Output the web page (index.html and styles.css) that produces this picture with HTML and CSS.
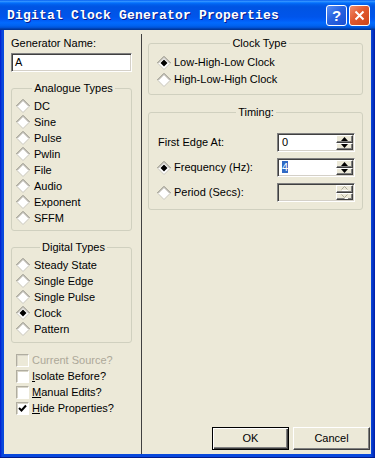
FILE: index.html
```html
<!DOCTYPE html>
<html lang="en">

<head>
    <meta charset="UTF-8">
    <meta name="viewport" content="width=device-width, initial-scale=1.0">
    <title>Digital Clock Generator Properties</title>
    <link rel="stylesheet" href="styles.css">
</head>

<body>
    <svg class="defs" width="0" height="0">
        <defs>
            <symbol id="dia" viewBox="0 0 14 14">
                <polygon points="7,0.5 13.5,7 7,13.5 0.5,7" fill="#fff" />
                <polyline points="0.5,7 7,0.5 13.5,7" fill="none" stroke="#716f64" />
                <polyline points="1.8,7 7,1.8 12.2,7" fill="none" stroke="#d4d0c8" />
                <polyline points="0.5,7 7,13.5 13.5,7" fill="none" stroke="#c8c6bc" />
            </symbol>
            <symbol id="dia-on" viewBox="0 0 14 14">
                <use href="#dia" />
                <polygon points="7,3.5 10.5,7 7,10.5 3.5,7" fill="#000" />
            </symbol>
        </defs>
    </svg>

    <div class="window">
        <div class="titlebar">
            <span class="title">Digital Clock Generator Properties</span>
            <span class="tb-btn help">?</span>
            <span class="tb-btn close">
                <svg width="11" height="11" viewBox="0 0 11 11"><path d="M1.5 1.5l8 8M9.5 1.5l-8 8" stroke="#fff" stroke-width="2" /></svg>
            </span>
        </div>

        <div class="frame">
            <div class="body">
                <!-- left side: name, types, options -->
                <div class="left">
                    <div class="label">Generator Name:</div>
                    <div class="field name-field">A</div>

                    <fieldset class="group">
                        <legend>Analogue Types</legend>
                        <div class="opt"><svg class="dia"><use href="#dia" /></svg><span>DC</span></div>
                        <div class="opt"><svg class="dia"><use href="#dia" /></svg><span>Sine</span></div>
                        <div class="opt"><svg class="dia"><use href="#dia" /></svg><span>Pulse</span></div>
                        <div class="opt"><svg class="dia"><use href="#dia" /></svg><span>Pwlin</span></div>
                        <div class="opt"><svg class="dia"><use href="#dia" /></svg><span>File</span></div>
                        <div class="opt"><svg class="dia"><use href="#dia" /></svg><span>Audio</span></div>
                        <div class="opt"><svg class="dia"><use href="#dia" /></svg><span>Exponent</span></div>
                        <div class="opt"><svg class="dia"><use href="#dia" /></svg><span>SFFM</span></div>
                    </fieldset>

                    <fieldset class="group digital">
                        <legend>Digital Types</legend>
                        <div class="opt"><svg class="dia"><use href="#dia" /></svg><span>Steady State</span></div>
                        <div class="opt"><svg class="dia"><use href="#dia" /></svg><span>Single Edge</span></div>
                        <div class="opt"><svg class="dia"><use href="#dia" /></svg><span>Single Pulse</span></div>
                        <div class="opt"><svg class="dia"><use href="#dia-on" /></svg><span>Clock</span></div>
                        <div class="opt"><svg class="dia"><use href="#dia" /></svg><span>Pattern</span></div>
                    </fieldset>

                    <div class="checks">
                        <div class="chk disabled"><span class="box"></span><span>Current Source?</span></div>
                        <div class="chk"><span class="box"></span><span><u>I</u>solate Before?</span></div>
                        <div class="chk"><span class="box"></span><span><u>M</u>anual Edits?</span></div>
                        <div class="chk">
                            <span class="box"><svg width="9" height="9" viewBox="0 0 9 9"><path d="M1 4l2.5 2.5L8 1.5" fill="none" stroke="#000" stroke-width="2" /></svg></span>
                            <span><u>H</u>ide Properties?</span>
                        </div>
                    </div>
                </div>

                <div class="divider"></div>

                <!-- right side: clock settings -->
                <div class="right">
                    <fieldset class="group clock">
                        <legend>Clock Type</legend>
                        <div class="opt"><svg class="dia"><use href="#dia-on" /></svg><span>Low-High-Low Clock</span></div>
                        <div class="opt"><svg class="dia"><use href="#dia" /></svg><span>High-Low-High Clock</span></div>
                    </fieldset>

                    <fieldset class="group timing">
                        <legend>Timing:</legend>
                        <div class="trow">
                            <span class="tlabel plain">First Edge At:</span>
                            <div class="field spin">
                                <span class="val">0</span>
                                <span class="arrows">
                                    <span class="arr"><svg width="7" height="4" viewBox="0 0 7 4"><path d="M0 4h7L3.5 0z" /></svg></span>
                                    <span class="arr"><svg width="7" height="4" viewBox="0 0 7 4"><path d="M0 0h7L3.5 4z" /></svg></span>
                                </span>
                            </div>
                        </div>
                        <div class="trow">
                            <span class="opt"><svg class="dia"><use href="#dia-on" /></svg><span>Frequency (Hz):</span></span>
                            <div class="field spin">
                                <span class="val"><span class="sel">4</span></span>
                                <span class="arrows">
                                    <span class="arr"><svg width="7" height="4" viewBox="0 0 7 4"><path d="M0 4h7L3.5 0z" /></svg></span>
                                    <span class="arr"><svg width="7" height="4" viewBox="0 0 7 4"><path d="M0 0h7L3.5 4z" /></svg></span>
                                </span>
                            </div>
                        </div>
                        <div class="trow">
                            <span class="opt"><svg class="dia"><use href="#dia" /></svg><span>Period (Secs):</span></span>
                            <div class="field spin off">
                                <span class="val"></span>
                                <span class="arrows">
                                    <span class="arr"><svg width="7" height="5" viewBox="0 0 7 5"><path d="M0.5 3.5L3.5 0.5L6.5 3.5" fill="none" stroke="#aca899" /><path d="M1 4.5h6" stroke="#fff" /></svg></span>
                                    <span class="arr"><svg width="7" height="5" viewBox="0 0 7 5"><path d="M0.5 0.5L3.5 3.5L6.5 0.5" fill="none" stroke="#aca899" /><path d="M3.5 4.5h3.5" stroke="#fff" /></svg></span>
                                </span>
                            </div>
                        </div>
                    </fieldset>

                    <div class="buttons">
                        <span class="btn default">OK</span>
                        <span class="btn">Cancel</span>
                    </div>
                </div>
            </div>
        </div>
    </div>
</body>

</html>
```

FILE: styles.css
```css
/**** DEFAULTS ****/

* {
    padding: 0;
    margin: 0;
    box-sizing: border-box;
}

html,
body {
    width: 375px;
    height: 458px;
    overflow: hidden;
}

body {
    font-family: "Liberation Sans", Arial, sans-serif;
    font-size: 11px;
    line-height: 13px;
    color: #000;
    background: #fff;
}

.defs {
    position: absolute;
    width: 0;
    height: 0;
}

/**** WINDOW ****/

.window {
    width: 375px;
    height: 458px;
    display: flex;
    flex-direction: column;
}

.titlebar {
    height: 30px;
    display: flex;
    align-items: center;
    padding: 0 5px 0 7px;
    background: linear-gradient(to bottom, #0058ee 0%, #3593ff 4%, #288eff 6%, #127dff 8%, #036ffc 10%, #0262ee 14%, #0057e5 20%, #0054e3 24%, #0055eb 56%, #005bf5 66%, #026afe 76%, #0062ef 86%, #0052d6 92%, #0040ab 96%, #003092 100%);
}

.title {
    flex: 1;
    font-family: "Liberation Mono", "Courier New", monospace;
    font-weight: bold;
    font-size: 13px;
    letter-spacing: 0.2px;
    color: #fff;
    text-shadow: 1px 1px #0a1a8a;
}

.tb-btn {
    width: 21px;
    height: 21px;
    border: 1px solid #fff;
    border-radius: 3px;
    display: flex;
    align-items: center;
    justify-content: center;
}

.help {
    margin-right: 2px;
    background: linear-gradient(135deg, #5a8ff4 0%, #2963e0 45%, #1a4fd4 100%);
    color: #fff;
    font-weight: bold;
    font-size: 15px;
}

.close {
    background: linear-gradient(135deg, #f08c6c 0%, #e1592f 45%, #cf4518 100%);
}

.frame {
    flex: 1;
    display: flex;
    padding: 0 4px 4px 4px;
    background: linear-gradient(to right, #0019cf 0px, #0848dc 2px, #0848dc 371px, #001ea8 375px);
    box-shadow: inset 0 -1px #001a8a;
}

.body {
    flex: 1;
    display: flex;
    background: #ece9d8;
}

/**** LEFT ****/

.left {
    width: 137px;
    padding: 7px 0 0 7px;
}

.divider {
    width: 1px;
    margin-top: 4px;
    background: #404040;
}

.right {
    flex: 1;
    display: flex;
    flex-direction: column;
    padding: 7px 1px 4px 6px;
}

.field {
    border: 1px solid;
    border-color: #808080 #fff #fff #808080;
    box-shadow: inset 1px 1px #404040, inset -1px -1px #d4d0c8;
    background: #fff;
}

.name-field {
    width: 121px;
    height: 19px;
    margin-top: 3px;
    padding: 2px 3px;
}

.group {
    width: 121px;
    margin-top: 10px;
    padding: 3px 0 4px 4px;
    border: 1px solid #d0d0bf;
    border-radius: 3px;
}

.group legend {
    margin: 0 auto;
    padding: 0 2px;
    line-height: 13px;
}

.digital {
    padding-bottom: 5px;
}

.opt {
    display: flex;
    align-items: center;
    gap: 4px;
    height: 16px;
}

.dia {
    width: 14px;
    height: 14px;
    flex: none;
}

.checks {
    margin-top: 9px;
}

.chk {
    display: flex;
    align-items: center;
    gap: 3px;
    height: 16px;
    padding-left: 5px;
}

.box {
    width: 13px;
    height: 13px;
    display: flex;
    align-items: center;
    justify-content: center;
    background: #fff;
    border: 1px solid;
    border-color: #b0ada0 #fff #fff #b0ada0;
    box-shadow: inset 1px 1px #d8d5c8;
}

.disabled {
    color: #aca899;
}

.disabled .box {
    background: #ece9d8;
}

/**** RIGHT ****/

.clock,
.timing {
    width: auto;
    margin-right: 7px;
}

.clock {
    margin-top: 0;
    padding: 4px 0 6px 8px;
}

.clock .opt {
    gap: 3px;
    height: 17px;
}

.timing {
    margin-top: 11px;
    padding: 14px 7px 7px 8px;
}

.trow {
    display: flex;
    align-items: center;
    justify-content: space-between;
    height: 19px;
    margin-bottom: 6px;
}

.trow:last-child {
    margin-bottom: 0;
}

.trow .opt {
    gap: 3px;
}

.plain {
    padding-left: 1px;
}

.spin {
    width: 78px;
    height: 19px;
    display: flex;
    padding: 1px;
}

.spin .val {
    flex: 1;
    padding-left: 3px;
    line-height: 15px;
}

.sel {
    background: #316ac5;
    color: #fff;
}

.off {
    background: #ece9d8;
}

.arrows {
    width: 17px;
    display: flex;
    flex-direction: column;
}

.arr {
    flex: 1;
    display: flex;
    align-items: center;
    justify-content: center;
    background: #ece9d8;
    border: 1px solid;
    border-color: #fff #404040 #404040 #fff;
    box-shadow: inset -1px -1px #808080;
}

.buttons {
    margin-top: auto;
    display: flex;
    justify-content: flex-end;
    gap: 4px;
}

.btn {
    width: 77px;
    height: 23px;
    display: flex;
    align-items: center;
    justify-content: center;
    background: #ece9d8;
    border: 1px solid;
    border-color: #fff #404040 #404040 #fff;
    box-shadow: inset -1px -1px #808080;
}

.default {
    border-color: #000;
    box-shadow: inset 1px 1px #fff, inset -1px -1px #404040, inset -2px -2px #808080;
}
```
